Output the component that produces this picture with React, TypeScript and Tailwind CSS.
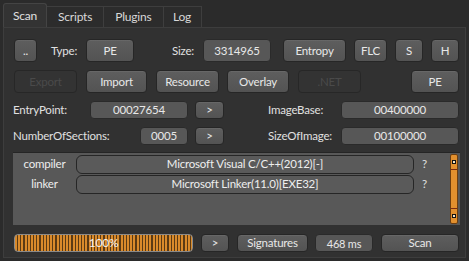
import React from "react"

const btn =
  "flex items-center justify-center rounded-[4px] border border-[#262626] bg-gradient-to-b from-[#5e5e5e] to-[#535353] text-[#e8e8e8] shadow-[inset_0_1px_0_rgba(255,255,255,0.06)]"
const off =
  "flex items-center justify-center rounded-[4px] border border-[#272727] bg-[#333333] text-[#4a4a4a]"
const box =
  "flex items-center justify-center rounded-[4px] border border-[#2a2a2a] bg-[#575757] text-[#e8e8e8]"

function Tab({ label, active }: { label: string; active?: boolean }) {
  return (
    <div
      className={
        active
          ? "flex h-[24px] w-[44px] items-center justify-center rounded-t-[3px] border border-b-0 border-[#444] bg-[#333333] text-[#e0e0e0]"
          : "mt-[3px] flex h-[21px] items-center justify-center border border-b-0 border-l-0 border-[#3e3e3e] bg-[#2c2c2c] px-[11px] text-[#d8d8d8]"
      }
    >
      {label}
    </div>
  )
}

function Field({ label, value }: { label: string; value: string }) {
  return (
    <div className="flex h-[20px] items-center">
      <div className="w-[63px] text-center text-[#eeeeee]">{label}</div>
      <div className="flex h-[19px] w-[338px] items-center justify-center rounded-[6px] border border-[#262626] bg-[#5a5a5a] text-[#eeeeee]">
        {value}
      </div>
      <div className="ml-[8px] text-[#e0e0e0]">?</div>
    </div>
  )
}

export default function App() {
  return (
    <div
      className="h-[261px] w-[469px] bg-[#2b2b2b] pl-[3px] pt-[3px] text-[11.5px] leading-none tracking-[-0.2px]"
      style={{ fontFamily: 'Lato, "Noto Sans", sans-serif' }}
    >
      <div className="flex text-[12px]">
        <Tab label="Scan" active />
        <Tab label="Scripts" />
        <Tab label="Plugins" />
        <div className="mt-[3px] flex h-[21px] w-[38px] items-center justify-center border border-b-0 border-l-0 border-[#3e3e3e] bg-[#2c2c2c] text-[#d8d8d8]">
          Log
        </div>
      </div>

      <div className="h-[231px] w-[463px] border border-[#3d3d3d] bg-[#313131] pl-[10px] pt-[11px]">
        {/* row 1 */}
        <div className="flex h-[23px] items-center">
          <div className={`${btn} h-[23px] w-[23px]`}>..</div>
          <div className="ml-[14px] w-[35px] text-[#e0e0e0]">Type:</div>
          <div className={`${btn} h-[23px] w-[48px]`}>PE</div>
          <div className="ml-[38px] w-[31px] text-[#e0e0e0]">Size:</div>
          <div className={`${box} h-[23px] w-[68px]`}>3314965</div>
          <div className={`${btn} ml-[12px] h-[23px] w-[63px]`}>Entropy</div>
          <div className={`${btn} ml-[8px] h-[23px] w-[33px]`}>FLC</div>
          <div className={`${btn} ml-[8px] h-[23px] w-[28px]`}>S</div>
          <div className={`${btn} ml-[8px] h-[23px] w-[28px]`}>H</div>
        </div>

        {/* row 2 */}
        <div className="mt-[8px] flex h-[23px] items-center">
          <div className={`${off} h-[23px] w-[63px]`}>Export</div>
          <div className={`${btn} ml-[9px] h-[23px] w-[61px]`}>Import</div>
          <div className={`${btn} ml-[9px] h-[23px] w-[63px]`}>Resource</div>
          <div className={`${btn} ml-[8px] h-[23px] w-[62px]`}>Overlay</div>
          <div className={`${off} ml-[9px] h-[23px] w-[63px]`}>.NET</div>
          <div className={`${btn} ml-[50px] h-[23px] w-[48px]`}>PE</div>
        </div>

        {/* row 3 */}
        <div className="mt-[8px] flex h-[18px] items-center">
          <div className="-ml-[1px] w-[77px] text-[#e0e0e0]">EntryPoint:</div>
          <div className={`${box} h-[18px] w-[98px]`}>00027654</div>
          <div className={`${btn} ml-[7px] h-[18px] w-[29px]`}>&gt;</div>
          <div className="ml-[44px] w-[73px] text-[#e0e0e0]">ImageBase:</div>
          <div className={`${box} h-[18px] w-[118px]`}>00400000</div>
        </div>

        {/* row 4 */}
        <div className="mt-[8px] flex h-[18px] items-center">
          <div className="-ml-[1px] w-[127px] text-[#e0e0e0]">NumberOfSections:</div>
          <div className={`${box} h-[18px] w-[48px]`}>0005</div>
          <div className={`${btn} ml-[7px] h-[18px] w-[29px]`}>&gt;</div>
          <div className="ml-[44px] w-[73px] text-[#e0e0e0]">SizeOfImage:</div>
          <div className={`${box} h-[18px] w-[118px]`}>00100000</div>
        </div>

        {/* compiler list */}
        <div className="-ml-[1px] mt-[7px] flex h-[73px] w-[447px] border-t border-[#252525] bg-[#585858] pt-[1px]">
          <div className="flex flex-col">
            <Field label="compiler" value="Microsoft Visual C/C++(2012)[-]" />
            <Field label="linker" value="Microsoft Linker(11.0)[EXE32]" />
          </div>
          <div className="ml-[23px] flex h-[70px] w-[8px] flex-col justify-between rounded-[2px] border border-[#6b3d10] bg-[#e2902e]">
            <div className="flex flex-col items-center">
              <div className="mt-[5px] h-[4px] w-[4px] border border-[#111] bg-[#f5e6c8]" />
              <div className="mt-[5px] h-[1px] w-full bg-[#7a2a10]" />
            </div>
            <div className="flex flex-col items-center">
              <div className="mb-[5px] h-[1px] w-full bg-[#7a2a10]" />
              <div className="mb-[5px] h-[4px] w-[4px] border border-[#111] bg-[#f5e6c8]" />
            </div>
          </div>
        </div>

        {/* bottom row */}
        <div className="mt-[9px] flex h-[18px] items-center">
          <div className="flex h-[18px] w-[179px] items-center justify-center rounded-[4px] border border-[#8a8a8a] bg-[repeating-linear-gradient(90deg,#d98a2b_0px,#d98a2b_2px,#5a3a14_2px,#5a3a14_3.2px)]">
            <span className="text-[12px] text-[#f2f2f2]">100%</span>
          </div>
          <div className={`${btn} ml-[8px] h-[18px] w-[28px]`}>&gt;</div>
          <div className={`${btn} ml-[8px] h-[18px] w-[71px]`}>Signatures</div>
          <div className={`${box} ml-[7px] h-[18px] w-[58px] text-[11px]`}>468 ms</div>
          <div className={`${btn} ml-[8px] h-[18px] w-[78px]`}>Scan</div>
        </div>
      </div>
    </div>
  )
}
